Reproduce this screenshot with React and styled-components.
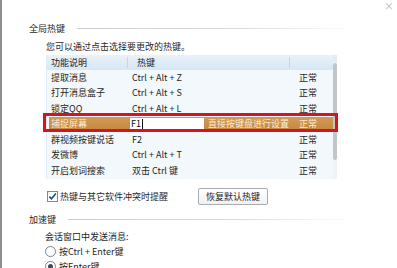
import styled, { createGlobalStyle } from 'styled-components'

const GlobalStyle = createGlobalStyle`
    body {
        margin: 0;
        background: #fff;
        font-family: "Noto Sans CJK SC", "Noto Sans", sans-serif;
        color: #1f1f1f;
    }
`

const Window = styled.div`
    width: 397px;
    height: 268px;
    overflow: hidden;
    box-sizing: border-box;
    border-left: 2px solid #8d8d8d;
    background: #fff;
    display: flex;
    flex-direction: column;
    font-size: 9px;

    & > * {
        flex-shrink: 0;
    }
`

const TopBar = styled.div`
    height: 22px;
    display: flex;
    justify-content: flex-end;
    align-items: flex-start;
    padding-right: 3px;
`

const Close = styled.span`
    font-size: 10px;
    line-height: 12px;
    color: #b9b9b9;
    margin-top: 0;
`

const Section = styled.div`
    padding-left: 27px;
    display: flex;
    flex-direction: column;
`

const TitleRow = styled.div`
    height: 13px;
    display: flex;
    align-items: center;
    margin-top: ${ props => props.top || 0 }px;
`

const TitleText = styled.span`
    line-height: 13px;
    white-space: nowrap;
`

const TitleLine = styled.div`
    flex: 1;
    height: 1px;
    margin-left: ${ props => props.gap }px;
    margin-right: 40px;
    background: linear-gradient(to right, #c9ccd0 0%, #d9dcdf 60%, rgba(230, 232, 235, 0) 100%);
`

const Hint = styled.div`
    margin: 6px 0 0 17px;
    line-height: 12px;
    white-space: nowrap;
`

const Table = styled.div`
    margin: 2px 0 0 17px;
    width: 291px;
    display: flex;
    background: #f3f8fc;
    border-left: 1px solid #e3ebf2;
    box-sizing: border-box;
`

const Grid = styled.div`
    flex: 1;
    display: flex;
    flex-direction: column;
`

const Header = styled.div`
    height: 15px;
    display: grid;
    grid-template-columns: 80px 162px 44px;
    background: linear-gradient(to bottom, #e9f2fa, #d6e7f4);
    align-items: center;
`

const HeadCell = styled.div`
    line-height: 15px;
    padding-left: ${ props => props.pad || 3 }px;
    border-left: ${ props => props.sep ? '1px solid #c7d6e3' : 'none' };
    height: 11px;
    display: flex;
    align-items: center;
`

const Row = styled.div`
    position: relative;
    height: 15.5px;
    display: grid;
    grid-template-columns: 80px 162px 44px;
    align-items: center;
    color: ${ props => props.active ? '#fcecd6' : '#1f1f1f' };
    background: ${ props => props.active ? 'linear-gradient(to bottom, #d29a55, #c4843d)' : 'transparent' };
    box-shadow: ${ props => props.active ? 'inset 2px 0 0 #f3f8fc' : 'none' };

    &::after {
        content: '';
        display: ${ props => props.active ? 'block' : 'none' };
        position: absolute;
        top: -3.5px;
        bottom: 0;
        left: -4px;
        right: -5px;
        border: 3px solid #d4141f;
    }
`

const Cell = styled.div`
    padding-left: ${ props => props.pad || 3 }px;
    white-space: nowrap;
    display: flex;
    align-items: center;
    line-height: 12px;
`

const KeyInput = styled.span`
    width: 77px;
    height: 12px;
    margin-left: -2px;
    background: #fff;
    color: #111;
    display: flex;
    align-items: center;
    padding-left: 1px;
    box-sizing: border-box;
`

const Caret = styled.span`
    display: inline-block;
    width: 1px;
    height: 10px;
    background: #111;
    margin-left: 1px;
`

const KeyTip = styled.span`
    margin-left: 4px;
    color: #fcecd6;
`

const Scrollbar = styled.div`
    width: 5px;
    display: flex;
    flex-direction: column;
    background: #eef3f7;
`

const ScrollArrow = styled.div`
    height: 7px;
    background: #e4ebf1;
`

const ScrollThumb = styled.div`
    height: 97px;
    margin-top: 1px;
    border-radius: 2px;
    background: #c3c6c9;
`

const OptionRow = styled.div`
    margin: 9px 0 0 17px;
    height: 17px;
    display: grid;
    grid-template-columns: 152px auto;
    align-items: center;
`

const CheckLabel = styled.label`
    display: flex;
    align-items: center;
    padding-left: 1px;
    white-space: nowrap;
`

const CheckBox = styled.span`
    width: 9px;
    height: 9px;
    border: 1px solid #7f8a96;
    background: #fff;
    margin-right: 2px;
    display: flex;
    align-items: center;
    justify-content: center;
`

const Button = styled.button`
    justify-self: start;
    height: 17px;
    padding: 0 7px;
    font: inherit;
    font-size: 9px;
    color: #1f1f1f;
    background: linear-gradient(to bottom, #ffffff, #f1f1f1);
    border: 1px solid #a9acb0;
    border-radius: 2px;
    line-height: 15px;
`

const SubLabel = styled.div`
    margin: 5px 0 0 16px;
    line-height: 12px;
    white-space: nowrap;
`

const RadioRow = styled.div`
    margin: 3px 0 0 16px;
    height: 12px;
    display: flex;
    align-items: center;
    white-space: nowrap;
`

const Radio = styled.span`
    width: 9px;
    height: 9px;
    border-radius: 50%;
    border: 1px solid #7c858f;
    background: #fff;
    margin-right: 3px;
    display: flex;
    align-items: center;
    justify-content: center;

    &::after {
        content: '';
        display: ${ props => props.checked ? 'block' : 'none' };
        width: 5px;
        height: 5px;
        border-radius: 50%;
        background: #3a4a5a;
    }
`

const hotkeys = [
    { name: '提取消息', key: 'Ctrl + Alt + Z' },
    { name: '打开消息盒子', key: 'Ctrl + Alt + S' },
    { name: '锁定QQ', key: 'Ctrl + Alt + L' },
    { name: '捕捉屏幕', key: 'F1', active: true },
    { name: '群视频按键说话', key: 'F2' },
    { name: '发微博', key: 'Ctrl + Alt + T' },
    { name: '开启划词搜索', key: '双击 Ctrl 键' },
]

const App = () => {
    return (
        <Window>
            <GlobalStyle />
            <TopBar>
                <Close>×</Close>
            </TopBar>
            <Section>
                <TitleRow>
                    <TitleText>全局热键</TitleText>
                    <TitleLine gap={ 12 } />
                </TitleRow>
                <Hint>您可以通过点击选择要更改的热键。</Hint>
                <Table>
                    <Grid>
                        <Header>
                            <HeadCell pad={ 4 }>功能说明</HeadCell>
                            <HeadCell sep pad={ 9 }>热键</HeadCell>
                            <HeadCell sep />
                        </Header>
                        { hotkeys.map(item => (
                            <Row key={ item.name } active={ item.active }>
                                <Cell pad={ 4 }>{ item.name }</Cell>
                                { item.active ? (
                                    <Cell pad={ 5 }>
                                        <KeyInput>F1<Caret /></KeyInput>
                                        <KeyTip>直接按键盘进行设置</KeyTip>
                                    </Cell>
                                ) : (
                                    <Cell pad={ 5 }>{ item.key }</Cell>
                                ) }
                                <Cell pad={ 10 }>正常</Cell>
                            </Row>
                        )) }
                    </Grid>
                    <Scrollbar>
                        <ScrollArrow />
                        <ScrollThumb />
                    </Scrollbar>
                </Table>
                <OptionRow>
                    <CheckLabel>
                        <CheckBox>
                            <svg width="9" height="9" viewBox="0 0 9 9">
                                <path d="M1.3 4.6 L3.5 6.8 L7.8 1.6" fill="none" stroke="#1f4e8c" strokeWidth="1.6" />
                            </svg>
                        </CheckBox>
                        热键与其它软件冲突时提醒
                    </CheckLabel>
                    <Button>恢复默认热键</Button>
                </OptionRow>
                <TitleRow top={ 8 }>
                    <TitleText>加速键</TitleText>
                    <TitleLine gap={ 12 } />
                </TitleRow>
                <SubLabel>会话窗口中发送消息:</SubLabel>
                <RadioRow>
                    <Radio />
                    按Ctrl + Enter键
                </RadioRow>
                <RadioRow>
                    <Radio checked />
                    按Enter键
                </RadioRow>
            </Section>
        </Window>
    )
}

export default App
